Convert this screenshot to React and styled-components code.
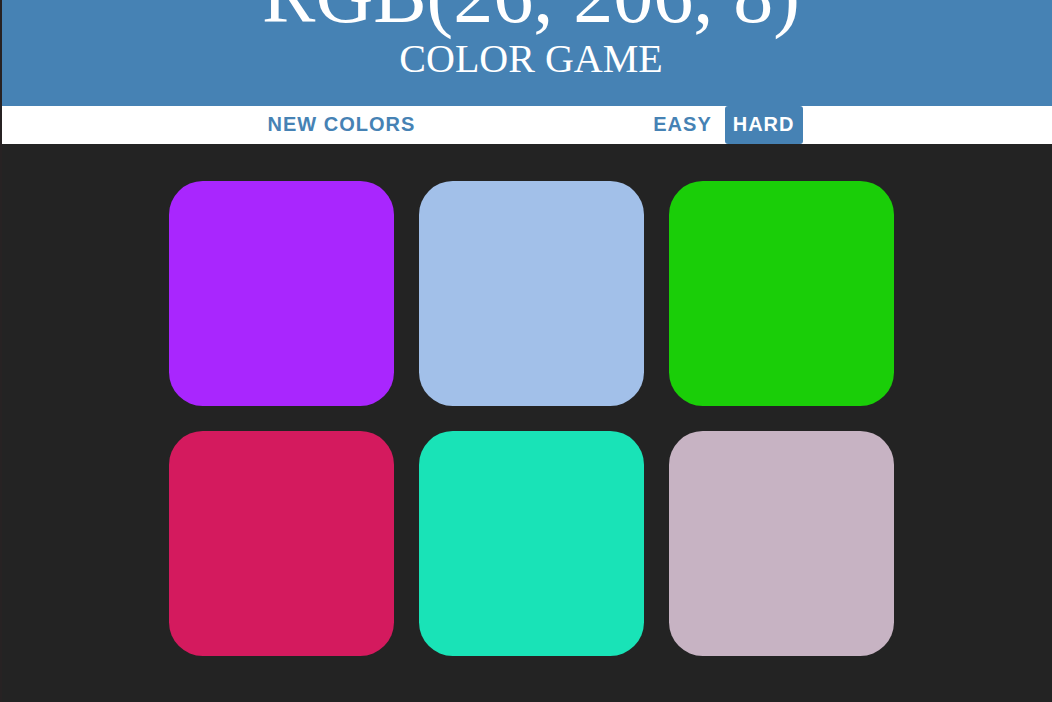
import React from "react";
import styled, { createGlobalStyle } from "styled-components";

const GlobalStyle = createGlobalStyle`
  html, body {
    margin: 0;
    padding: 0;
    background: #232323;
    overflow: hidden;
    font-family: "Liberation Sans", Arial, sans-serif;
  }
`;

const Page = styled.div`
  display: flex;
  width: 100vw;
  height: 100vh;
  overflow: hidden;
`;

const EdgeStrip = styled.div`
  width: 2px;
  flex: 0 0 2px;
  background: #272223;
`;

const Main = styled.div`
  flex: 1;
  display: flex;
  flex-direction: column;
  min-width: 0;
`;

const Header = styled.header`
  margin-top: -45px;
  padding: 0 0 25px 8px;
  background: steelblue;
  color: #fff;
  text-align: center;
  font-family: "Liberation Serif", "Times New Roman", serif;
  font-weight: normal;
`;

const ColorDisplay = styled.div`
  font-size: 80px;
  line-height: 80px;
`;

const Subtitle = styled.div`
  margin-top: 2px;
  font-size: 40px;
  line-height: 44px;
`;

const Stripe = styled.nav`
  height: 38px;
  background: #fff;
  display: flex;
  justify-content: center;
  align-items: stretch;
  gap: 5px;
  padding-left: 8px;
`;

const Button = styled.button`
  border: none;
  outline: none;
  margin: 0;
  padding: 0 8px 2px;
  height: 100%;
  border-radius: 3px;
  background: ${(p) => (p.$selected ? "steelblue" : "transparent")};
  color: ${(p) => (p.$selected ? "#fff" : "steelblue")};
  font-family: "Liberation Sans", Arial, sans-serif;
  font-weight: 700;
  font-size: 20px;
  letter-spacing: 1px;
  text-transform: uppercase;
  cursor: pointer;
`;

const Message = styled.span`
  width: 212px;
`;

const Board = styled.main`
  display: grid;
  grid-template-columns: repeat(3, 225px);
  gap: 25px;
  justify-content: center;
  padding: 37px 0 0 8px;
`;

const Square = styled.div`
  width: 225px;
  height: 225px;
  border-radius: 15%;
  background: ${(p) => p.$color};
`;

const colors = [
  "rgb(169, 38, 254)",
  "rgb(162, 192, 233)",
  "rgb(26, 206, 8)",
  "rgb(212, 26, 94)",
  "rgb(25, 227, 183)",
  "rgb(199, 179, 195)",
];

export default function App() {
  return (
    <>
      <GlobalStyle />
      <Page>
        <EdgeStrip />
        <Main>
          <Header>
            <ColorDisplay>RGB(26, 206, 8)</ColorDisplay>
            <Subtitle>COLOR GAME</Subtitle>
          </Header>
          <Stripe>
            <Button>New Colors</Button>
            <Message />
            <Button>Easy</Button>
            <Button $selected>Hard</Button>
          </Stripe>
          <Board>
            {colors.map((c, i) => (
              <Square key={i} $color={c} />
            ))}
          </Board>
        </Main>
      </Page>
    </>
  );
}
